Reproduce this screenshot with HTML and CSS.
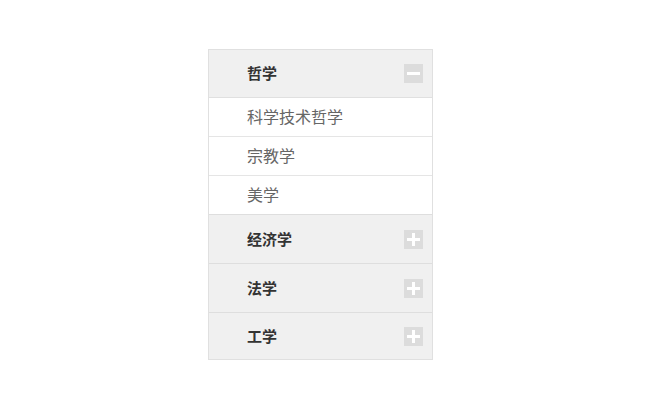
FILE: index.html
```html
<!DOCTYPE html>
<html lang="zh-CN">

<head>
    <meta charset="UTF-8">
    <title>学科导航</title>
    <link rel="stylesheet" href="styles.css">
</head>

<body>
    <div class="menu">
        <div class="menu-title open">
            <span>哲学</span>
            <i class="toggle"></i>
        </div>
        <ul class="menu-list">
            <li>科学技术哲学</li>
            <li>宗教学</li>
            <li>美学</li>
        </ul>
        <div class="menu-title">
            <span>经济学</span>
            <i class="toggle"></i>
        </div>
        <div class="menu-title">
            <span>法学</span>
            <i class="toggle"></i>
        </div>
        <div class="menu-title">
            <span>工学</span>
            <i class="toggle"></i>
        </div>
    </div>
</body>

</html>
```

FILE: styles.css
```css
body {
    margin: 0;
    padding: 0;
    background: #fff;
    font-family: "Noto Sans CJK SC", "Liberation Sans", sans-serif;
}

.menu {
    width: 223px;
    margin: 49px 0 0 208px;
    border: 1px solid #e0e0e0;
}

.menu-title {
    display: flex;
    align-items: center;
    justify-content: space-between;
    box-sizing: border-box;
    height: 49px;
    padding: 0 9px 2px 38px;
    background: #f0f0f0;
    border-top: 1px solid #dedede;
    font-size: 15px;
    font-weight: bold;
    color: #333;
}

.menu-title:first-child {
    border-top: none;
    height: 47px;
}

.menu-title:last-child {
    height: 47px;
}

.toggle {
    position: relative;
    width: 19px;
    height: 19px;
    margin-top: 2px;
    background: #dcdcdc;
}

.toggle::before,
.toggle::after {
    content: "";
    position: absolute;
    background: #fff;
}

.toggle::before {
    left: 3px;
    top: 8px;
    width: 13px;
    height: 3px;
}

.toggle::after {
    left: 8px;
    top: 3px;
    width: 3px;
    height: 13px;
}

.open .toggle::after {
    display: none;
}

.menu-list {
    list-style: none;
    margin: 0;
    padding: 0;
    border-top: 1px solid #e0e0e0;
}

.menu-list li {
    height: 38px;
    line-height: 36px;
    padding-left: 38px;
    background: #fff;
    border-bottom: 1px solid #e5e5e5;
    font-size: 16px;
    color: #666;
}

.menu-list li:last-child {
    border-bottom: none;
}
```
